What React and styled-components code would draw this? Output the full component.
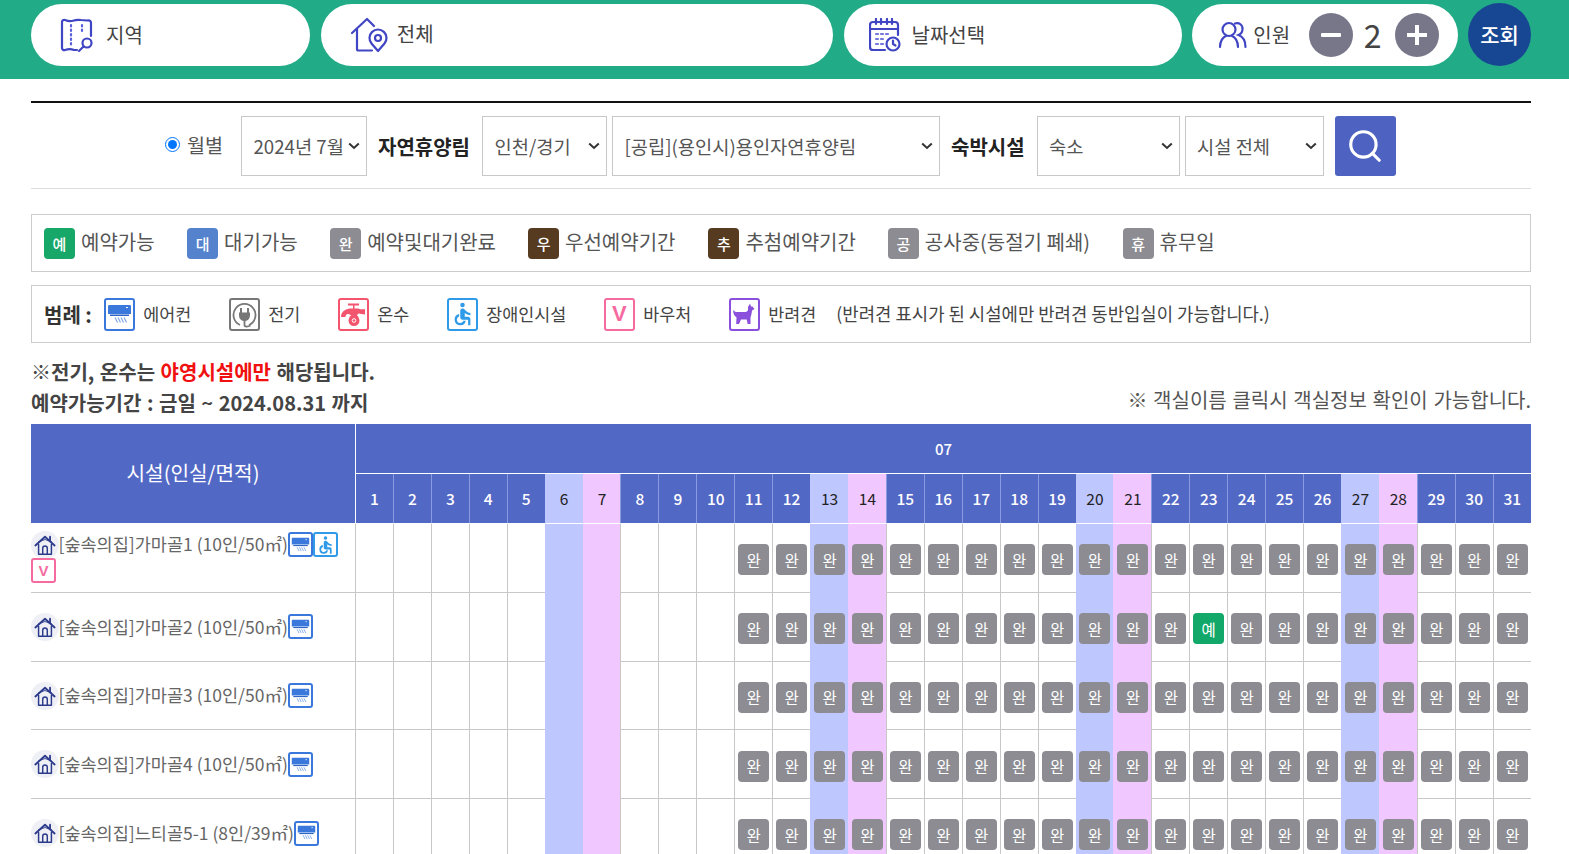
import React from "react";
import styled, { createGlobalStyle } from "styled-components";
import { Search } from "lucide-react";
import { MdAccessible } from "react-icons/md";

const FONT = `"Noto Sans CJK KR", "Noto Sans", sans-serif`;
const CHEVRON = `url("data:image/svg+xml,%3Csvg xmlns='http://www.w3.org/2000/svg' width='12' height='8' viewBox='0 0 12 8'%3E%3Cpath d='M1.2 1.5 6 6l4.800-4.500' fill='none' stroke='%23333' stroke-width='2'/%3E%3C/svg%3E")`;

const Global = createGlobalStyle`
  html, body { margin: 0; padding: 0; height: 854px; overflow: hidden; background: #fff; }
  body { font-family: ${FONT}; color: #444; }
  * { box-sizing: border-box; }
`;

const TopBar = styled.header`
  height: 79px;
  background: #22ab87;
  padding: 3px 30px 0 31px;
  display: flex;
  gap: 10.75px;
  align-items: flex-start;
`;
const Pill = styled.div`
  width: ${(p) => p.$w}px;
  height: 62px;
  margin-top: 1px;
  flex: none;
  background: #fff;
  border-radius: 31px;
  display: flex;
  align-items: center;
  padding-left: ${(p) => p.$pad}px;
  gap: ${(p) => p.$gap ?? 11}px;
  font-size: 20px;
  color: #444;
`;
const PillLabel = styled.span`
  position: relative;
  top: ${(p) => p.$up ?? -1}px;
`;
const RoundBtn = styled.button`
  width: 44px;
  height: 44px;
  margin-left: ${(p) => p.$ml ?? 0}px;
  border: 0;
  padding: 0;
  border-radius: 50%;
  background: #777789;
  display: flex;
  align-items: center;
  justify-content: center;
  flex: none;
`;
const Count = styled.span`
  font-size: 32px;
  line-height: 1;
  width: 32px;
  text-align: center;
  color: #444;
  position: relative;
  top: -1px;
  left: -1px;
`;
const LookupBtn = styled.button`
  width: 63px;
  height: 63px;
  margin-left: -1px;
  flex: none;
  border: 0;
  border-radius: 50%;
  background: #174793;
  color: #fff;
  font: 500 21px ${FONT};
  padding: 0 0 2px;
`;

const Main = styled.main`
  width: 1500px;
  margin: 22px 0 0 31px;
`;
const FilterRow = styled.form`
  border-top: 2px solid #111;
  border-bottom: 1px solid #ddd;
  height: 88px;
  padding: 13px 0 0 134px;
  display: flex;
  align-items: flex-start;
`;
const RadioLabel = styled.label`
  display: flex;
  align-items: center;
  font-size: 19.6px;
  height: 60px;
  color: #555;
  width: 76px;
  flex: none;
  margin-top: -2px;
  input { margin: 0 7px 0 0; width: 15px; height: 15px; accent-color: #0075ff; }
`;
const Select = styled.select`
  appearance: none;
  width: ${(p) => p.$w}px;
  margin-left: ${(p) => p.$ml ?? 0}px;
  height: 60px;
  flex: none;
  border: 1px solid #c8c8c8;
  background: #fff ${CHEVRON} no-repeat right 6px center;
  font: 400 18.7px ${FONT};
  color: #555;
  padding: 0 0 2px 11.5px;
  border-radius: 0;
`;
const FilterLabel = styled.strong`
  font-size: 20px;
  font-weight: 700;
  color: #222;
  line-height: 62px;
  margin: 0 12px 0 ${(p) => p.$ml}px;
  flex: none;
`;
const SearchBtn = styled.button`
  width: 61px;
  height: 60px;
  margin-left: 11px;
  flex: none;
  border: 0;
  border-radius: 3px;
  background: #4e62c1;
  color: #fff;
  display: flex;
  align-items: center;
  justify-content: center;
  padding: 0;
`;

const LegendBox = styled.div`
  height: 58px;
  margin-top: ${(p) => p.$mt}px;
  border: 1px solid #ccc;
  display: flex;
  align-items: center;
  padding-left: 12px;
`;
const StatusItem = styled.div`
  display: flex;
  align-items: center;
  gap: 6px;
  font-size: 20px;
  color: #555;
  margin-right: ${(p) => p.$mr}px;
  white-space: nowrap;
`;
const StatusText = styled.span`
  position: relative;
  top: -2px;
`;
const StatusBadge = styled.span`
  width: 31px;
  height: 31px;
  flex: none;
  border-radius: 4px;
  background: ${(p) => p.$bg};
  color: #fff;
  font-size: 15px;
  font-weight: 500;
  display: inline-flex;
  align-items: center;
  justify-content: center;
`;
const LegendTitle = styled.strong`
  font-size: 20px;
  color: #333;
  margin-right: 12px;
  white-space: nowrap;
`;
const FacilityItem = styled.div`
  display: flex;
  align-items: center;
  gap: 8.5px;
  font-size: 17.4px;
  color: #444;
  margin-right: ${(p) => p.$mr ?? 37.5}px;
  white-space: nowrap;
`;
const FacilityText = styled.span`
  position: relative;
  top: -1px;
`;
const FacilityNote = styled.span`
  font-size: 17.8px;
  color: #444;
  white-space: nowrap;
  position: relative;
  top: -1px;
`;
const IconFrame = styled.span`
  width: ${(p) => p.$w ?? 31}px;
  height: ${(p) => p.$h ?? 33}px;
  flex: none;
  display: inline-flex;
  align-items: center;
  justify-content: center;
  background: #fff;
  border: 2px solid ${(p) => p.$c};
  border-radius: 3px;
  color: ${(p) => p.$c};
  font: 700 ${(p) => p.$fs ?? 20}px "Liberation Sans", sans-serif;
`;
const RoomIcon = styled(IconFrame)`
  vertical-align: middle;
  margin: -3px 0;
  position: relative;
  top: -2px;
`;

const NoteRow = styled.div`
  margin-top: 13px;
  display: flex;
  justify-content: space-between;
  align-items: flex-end;
  height: 68px;
  padding-bottom: 6px;
`;
const NoteLeft = styled.div`
  font-size: 20px;
  font-weight: 700;
  color: #444;
  line-height: 31px;
  word-spacing: 1px;
`;
const Red = styled.span`
  color: #f01010;
  font-weight: 700;
`;
const NoteRight = styled.div`
  font-size: 20px;
  color: #555;
  word-spacing: 1.2px;
  position: relative;
  top: -4px;
`;

const Table = styled.table`
  width: 1500px;
  table-layout: fixed;
  border-collapse: separate;
  border-spacing: 0;
`;
const HeadName = styled.th`
  background: #5268c5;
  color: #fff;
  font-size: 20.2px;
  font-weight: 400;
  padding: 0 0 2px;
`;
const HeadMonth = styled.th`
  height: 50px;
  background: #5268c5;
  color: #fff;
  font-size: 15px;
  font-weight: 500;
  border-left: 1px solid #fff;
  border-bottom: 1px solid #fff;
  padding: 0;
`;
const dayBg = (k) => (k === "sat" ? "#bfc7ff" : k === "sun" ? "#f0c8ff" : "#5268c5");
const HeadDay = styled.th`
  height: 49px;
  padding: 0 0 2px;
  background: ${(p) => dayBg(p.$k)};
  color: ${(p) => (p.$k ? "#222" : "#fff")};
  font-size: 15.5px;
  font-weight: ${(p) => (p.$k ? 400 : 500)};
  border-left: 1px solid ${(p) => (p.$k ? "transparent" : "#8a9ae0")};
  &:first-child { border-left-color: #fff; }
`;
const NameCell = styled.td`
  height: 68.75px;
  padding: 0;
  border-top: ${(p) => (p.$first ? "0" : "1px solid #c8c8c8")};
  font-size: 17.5px;
  line-height: 26px;
  color: #666;
  vertical-align: middle;
`;
const DayCell = styled.td`
  padding: 0;
  text-align: center;
  vertical-align: middle;
  background: ${(p) => (p.$k ? dayBg(p.$k) : "#fff")};
  border-top: 1px solid ${(p) => (p.$first ? "#fff" : p.$k ? "transparent" : "#c8c8c8")};
  border-left: 1px solid ${(p) => (p.$k ? "transparent" : "#c8c8c8")};
`;
const Slot = styled.span`
  display: inline-flex;
  width: 31px;
  height: 31px;
  border-radius: 4px;
  background: ${(p) => (p.$open ? "#12a869" : "#8c8c92")};
  color: #fff;
  font-size: 15.5px;
  align-items: center;
  justify-content: center;
  margin-top: 4px;
`;
const HomeBadge = styled.span`
  display: inline-flex;
  width: 27.5px;
  height: 28px;
  border-radius: 50%;
  background: #eef0f5;
  align-items: center;
  justify-content: center;
  vertical-align: middle;
  margin: -3px 0;
  position: relative;
  top: -2px;
`;

const MapIcon = () => (
  <svg width="36" height="36" viewBox="0 0 36 36" fill="none" stroke="#4045c4" strokeWidth="2.2" strokeLinecap="round" strokeLinejoin="round">
    <path d="M3 5c0-1.500 1.500-2.500 3-2 2.500 1 5.500 1.500 8 .7 3-1 5-1.200 8-.7l6 .5c3-.8 4 .8 4 2.500V19" />
    <path d="M3 5v26c0 1.500 1.500 2.500 3 2 3-1 6-1.200 9 0h3" />
    <path d="M12 8v21M23 8v9" strokeDasharray="1.500 3" stroke="#5a60d8" />
    <circle cx="28" cy="26" r="4.500" />
    <path d="M24.500 29.500 20 34" />
  </svg>
);
const HouseIcon = () => (
  <svg width="38" height="36" viewBox="0 0 38 36" fill="none" stroke="#4045c4" strokeWidth="2.2" strokeLinecap="round" strokeLinejoin="round">
    <path d="M1 16 16 2l7 7" />
    <path d="M6 12v20c0 .8.500 1.500 1.500 1.500H21" />
    <path d="M27 34l-6.500-7.500a8.500 8.500 0 1 1 13 0z" />
    <circle cx="27" cy="21" r="3" />
  </svg>
);
const CalendarIcon = () => (
  <svg width="32" height="34" viewBox="0 0 32 34" fill="none" stroke="#4045c4" strokeWidth="2.2" strokeLinecap="round" strokeLinejoin="round">
    <path d="M16 32H4c-1.500 0-3-1-3-3V7c0-2 1.500-3 3-3h22c1.500 0 3 1 3 3v10" />
    <path d="M1 11h28M7 1v5M12 1v5M18 1v5M23 1v5" />
    <path d="M7 16h2M12 16h2M17 16h2M7 21h2M12 21h2M7 26h2M12 26h2" stroke="#7478dd" />
    <circle cx="24" cy="26" r="6.500" />
    <path d="M24 22.500V26l2.500 1.500" />
  </svg>
);
const PeopleIcon = () => (
  <svg width="30" height="28" viewBox="0 0 30 28" fill="none" stroke="#4045c4" strokeWidth="2.2" strokeLinecap="round">
    <circle cx="11" cy="8.500" r="6.500" />
    <path d="M2 26c0-6 3-10 6-11M14 15c3 1 6 5 6 11" />
    <path d="M17 2.500c4-1.500 8 1.500 7.500 6-.2 2.500-1.500 4.500-4 5.500 4 1.500 7 6 7 12" />
  </svg>
);
const Minus = () => (
  <svg width="22" height="22" viewBox="0 0 22 22"><rect x="1" y="9" width="20" height="4" rx="1" fill="#fff" /></svg>
);
const Plus = () => (
  <svg width="22" height="22" viewBox="0 0 22 22"><path d="M9 1h4v8h8v4h-8v8H9v-8H1V9h8z" fill="#fff" /></svg>
);

const AcGlyph = ({ s = 25 }) => (
  <svg width={s} height={s * 0.8} viewBox="0 0 25 20">
    <path d="M1 2.500c0-1 .5-1.500 1.500-1.500h20c1 0 1.500.5 1.500 1.500V10H1z" fill="#3b78dc" />
    <path d="M3 10.500h19v1.500H3z" fill="#2f65c4" />
    <path d="M19 3.500h2" stroke="#fff" strokeWidth="1" />
    <path d="M8 13.500l2.500 5M11 13.500l2.500 5M14 13.500l2.500 5M17 13.500l2.500 5" stroke="#7fa8e8" strokeWidth="1.200" fill="none" />
  </svg>
);
const PlugGlyph = () => (
  <svg width="27" height="29" viewBox="0 0 27 29" fill="none">
    <path d="M9 25a11 11 0 1 1 9 0" stroke="#777" strokeWidth="1.800" />
    <path d="M10 8v5M17 8v5" stroke="#777" strokeWidth="2" />
    <path d="M8 12.500h11v3a5 5 0 0 1-11 0z" fill="#777" />
    <path d="M13.500 20v5c0 2 3 2 6 .5" stroke="#777" strokeWidth="1.800" />
  </svg>
);
const TapGlyph = () => (
  <svg width="27" height="29" viewBox="0 0 27 29">
    <path d="M8 3.500h11v2h-4.500V9H13V5.500H8z" fill="#f2556d" />
    <path d="M9.500 8.500h8.500c2 1 5.500 1 7 .5v5.500c-2.500 0-5-1-7-1-.5 2-1.500 3-1.500 3h-5C11 15 9.500 14 8 14c-1.500 0-2.500 1-2.500 3H1c0-5 3.500-7.500 8.500-8.500z" fill="#f2556d" />
    <path d="M10 16h8c.5 1.500 1.500 3 1.500 4.500a5.500 5.500 0 0 1-11 0c0-1.500 1-3 1.500-4.500z" fill="#f2556d" />
    <circle cx="14" cy="20.500" r="1.800" fill="none" stroke="#fff" strokeWidth="1" />
  </svg>
);
const DogGlyph = () => (
  <svg width="24" height="24" viewBox="0 0 24 24">
    <path d="M1.500 8c1 1.500 1.500 2 3.500 2h9l2-1.500V5L18 1.500 19 4.500h1.500l2 2.500-2.500 1.500-.5 3.500-1 3.500V22h-2.800l-1-4.500H9L7 22H4.200l.3-6.500C2.500 14 .5 10.500 1.500 8z" fill="currentColor" />
  </svg>
);
const SmallHome = () => (
  <svg width="22" height="22" viewBox="0 0 24 24" fill="none" stroke="#2c3a8c" strokeLinejoin="round" strokeLinecap="round">
    <path d="M1.500 12.500 12 3l10.500 9.500" strokeWidth="2" />
    <path d="M5 8.500 12 6l7 2.500" strokeWidth="1" />
    <path d="M5 11.500V22h14V11.500" strokeWidth="1.600" />
    <path d="M9.500 22v-6.500a2.500 2.500 0 0 1 5 0V22" strokeWidth="1.600" />
    <path d="M17.500 3v4" strokeWidth="2" />
  </svg>
);

const statusItems = [
  ["예", "예약가능", "#17a768", 32.5],
  ["대", "대기가능", "#5582cc", 32.5],
  ["완", "예약및대기완료", "#8c8c92", 32],
  ["우", "우선예약기간", "#563b20", 33],
  ["추", "추첨예약기간", "#563b20", 32],
  ["공", "공사중(동절기 폐쇄)", "#8c8c92", 32.5],
  ["휴", "휴무일", "#8c8c92", 0],
];

const days = Array.from({ length: 31 }, (_, i) => i + 1);
const kind = (d) => (d % 7 === 6 ? "sat" : d % 7 === 0 ? "sun" : undefined);

const rooms = [
  { name: "[숲속의집]가마골1 (10인/50㎡)", wheel: true, voucher: true },
  { name: "[숲속의집]가마골2 (10인/50㎡)", open: 23 },
  { name: "[숲속의집]가마골3 (10인/50㎡)" },
  { name: "[숲속의집]가마골4 (10인/50㎡)" },
  { name: "[숲속의집]느티골5-1 (8인/39㎡)" },
];

export default function App() {
  return (
    <>
      <Global />
      <TopBar>
        <Pill $w={279} $pad={28}><MapIcon /><PillLabel>지역</PillLabel></Pill>
        <Pill $w={512} $pad={30} $gap={8}><HouseIcon /><PillLabel $up={-2}>전체</PillLabel></Pill>
        <Pill $w={338} $pad={25}><CalendarIcon /><PillLabel>날짜선택</PillLabel></Pill>
        <Pill $w={266} $pad={26} $gap={5}>
          <PeopleIcon />
          <PillLabel>인원</PillLabel>
          <RoundBtn $ml={13.5}><Minus /></RoundBtn>
          <Count>2</Count>
          <RoundBtn><Plus /></RoundBtn>
        </Pill>
        <LookupBtn>조회</LookupBtn>
      </TopBar>
      <Main>
        <FilterRow>
          <RadioLabel><input type="radio" defaultChecked name="m" />월별</RadioLabel>
          <Select $w={126}><option>2024년 7월</option></Select>
          <FilterLabel $ml={11}>자연휴양림</FilterLabel>
          <Select $w={125}><option>인천/경기</option></Select>
          <Select $w={328} $ml={5}><option>[공립](용인시)용인자연휴양림</option></Select>
          <FilterLabel $ml={11}>숙박시설</FilterLabel>
          <Select $w={143}><option>숙소</option></Select>
          <Select $w={139} $ml={5}><option>시설 전체</option></Select>
          <SearchBtn type="button"><Search size={38} strokeWidth={2} /></SearchBtn>
        </FilterRow>

        <LegendBox $mt={25}>
          {statusItems.map(([b, t, c, mr]) => (
            <StatusItem key={t} $mr={mr}>
              <StatusBadge $bg={c}>{b}</StatusBadge>
              <StatusText>{t}</StatusText>
            </StatusItem>
          ))}
        </LegendBox>

        <LegendBox $mt={13}>
          <LegendTitle>범례 :</LegendTitle>
          <FacilityItem><IconFrame $c="#3b78dc"><AcGlyph /></IconFrame><FacilityText>에어컨</FacilityText></FacilityItem>
          <FacilityItem><IconFrame $c="#777"><PlugGlyph /></IconFrame><FacilityText>전기</FacilityText></FacilityItem>
          <FacilityItem><IconFrame $c="#f2556d"><TapGlyph /></IconFrame><FacilityText>온수</FacilityText></FacilityItem>
          <FacilityItem><IconFrame $c="#2f9be8"><MdAccessible size={30} /></IconFrame><FacilityText>장애인시설</FacilityText></FacilityItem>
          <FacilityItem><IconFrame $c="#f56b9f" $fs={22}>V</IconFrame><FacilityText>바우처</FacilityText></FacilityItem>
          <FacilityItem $mr={20}><IconFrame $c="#8a4fdc"><DogGlyph /></IconFrame><FacilityText>반려견</FacilityText></FacilityItem>
          <FacilityNote>(반려견 표시가 된 시설에만 반려견 동반입실이 가능합니다.)</FacilityNote>
        </LegendBox>

        <NoteRow>
          <NoteLeft>
            ※전기, 온수는 <Red>야영시설에만</Red> 해당됩니다.<br />
            예약가능기간 : 금일 ~ 2024.08.31 까지
          </NoteLeft>
          <NoteRight>※ 객실이름 클릭시 객실정보 확인이 가능합니다.</NoteRight>
        </NoteRow>

        <Table>
          <colgroup>
            <col style={{ width: 324 }} />
            {days.map((d) => <col key={d} />)}
          </colgroup>
          <thead>
            <tr>
              <HeadName rowSpan={2}>시설(인실/면적)</HeadName>
              <HeadMonth colSpan={31}>07</HeadMonth>
            </tr>
            <tr>
              {days.map((d) => <HeadDay key={d} $k={kind(d)}>{d}</HeadDay>)}
            </tr>
          </thead>
          <tbody>
            {rooms.map((r, i) => (
              <tr key={r.name}>
                <NameCell $first={i === 0}>
                  <HomeBadge><SmallHome /></HomeBadge>
                  {r.name}
                  <RoomIcon $w={25} $h={25} $c="#3b78dc"><AcGlyph s={19} /></RoomIcon>
                  {r.wheel && <RoomIcon $w={25} $h={25} $c="#2f9be8"><MdAccessible size={22} /></RoomIcon>}
                  {r.voucher && <RoomIcon $w={25} $h={25} $c="#f56b9f" $fs={15}>V</RoomIcon>}
                </NameCell>
                {days.map((d) => (
                  <DayCell key={d} $k={kind(d)} $first={i === 0}>
                    {d >= 11 && <Slot $open={r.open === d}>{r.open === d ? "예" : "완"}</Slot>}
                  </DayCell>
                ))}
              </tr>
            ))}
          </tbody>
        </Table>
      </Main>
    </>
  );
}
